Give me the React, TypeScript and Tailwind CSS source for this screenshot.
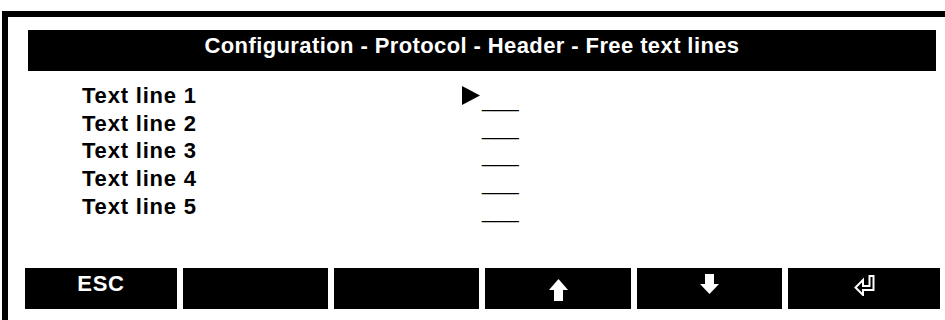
const font = { fontFamily: '"Liberation Sans", Arial, sans-serif' }

const lines = ['Text line 1', 'Text line 2', 'Text line 3', 'Text line 4', 'Text line 5']

function UpArrow() {
  return (
    <svg width="19" height="22" viewBox="0 0 19 22" className="mt-[3px]">
      <path d="M9.5 0 L19 11 L14 11 L14 22 L5 22 L5 11 L0 11 Z" fill="white" />
    </svg>
  )
}

function DownArrow() {
  return (
    <svg width="19" height="20" viewBox="0 0 19 20" className="-mt-[9px]">
      <path d="M5 0 L14 0 L14 10 L19 10 L9.5 20 L0 10 L5 10 Z" fill="white" />
    </svg>
  )
}

function EnterIcon() {
  return (
    <svg width="21" height="21" viewBox="0 0 21 21" className="-mt-[6px]">
      <path
        d="M19.5 1 L15.5 1 L15.5 11 L9 11 L9 5 L1.5 12.5 L9 20 L9 15 L19.5 15 Z"
        fill="none"
        stroke="white"
        strokeWidth="2"
        strokeLinejoin="miter"
      />
    </svg>
  )
}

export default function App() {
  return (
    <div className="h-[320px] w-[945px] overflow-hidden bg-white" style={font}>
      <div className="ml-[2px] mt-[11px] h-[320px] border-l-[6px] border-t-[6px] border-black pl-[20px] pr-[9px] pt-[13px]">
        <div className="flex h-[41px] items-center justify-center bg-black pb-[10px] pr-[20px] text-[22px] font-bold tracking-[0.4px] text-white">
          Configuration - Protocol - Header - Free text lines
        </div>

        <div className="mt-[11px] flex flex-col pl-[54px]">
          {lines.map((l, i) => (
            <div key={l} className="flex h-[27.7px] items-center text-[22px] font-bold leading-none text-black">
              <span className="w-[380px] tracking-[0.8px]">{l}</span>
              <span className="flex w-[20px] items-center">
                {i === 0 && (
                  <svg width="18" height="19" viewBox="0 0 18 19">
                    <path d="M0 0 L18 9.5 L0 19 Z" fill="black" />
                  </svg>
                )}
              </span>
              <span className="translate-y-[4px] font-normal">___</span>
            </div>
          ))}
        </div>

        <div className="-ml-[3px] mt-[48px] grid grid-cols-[152px_145px_145px_146px_145px_152px] gap-[6px]">
          <div className="flex h-[41px] items-center justify-center bg-black pb-[10px] text-[22px] font-bold tracking-[0.8px] text-white">
            ESC
          </div>
          <div className="h-[41px] bg-black" />
          <div className="h-[41px] bg-black" />
          <div className="flex h-[41px] items-center justify-center bg-black">
            <UpArrow />
          </div>
          <div className="flex h-[41px] items-center justify-center bg-black">
            <DownArrow />
          </div>
          <div className="flex h-[41px] items-center justify-center bg-black">
            <EnterIcon />
          </div>
        </div>
      </div>
    </div>
  )
}
